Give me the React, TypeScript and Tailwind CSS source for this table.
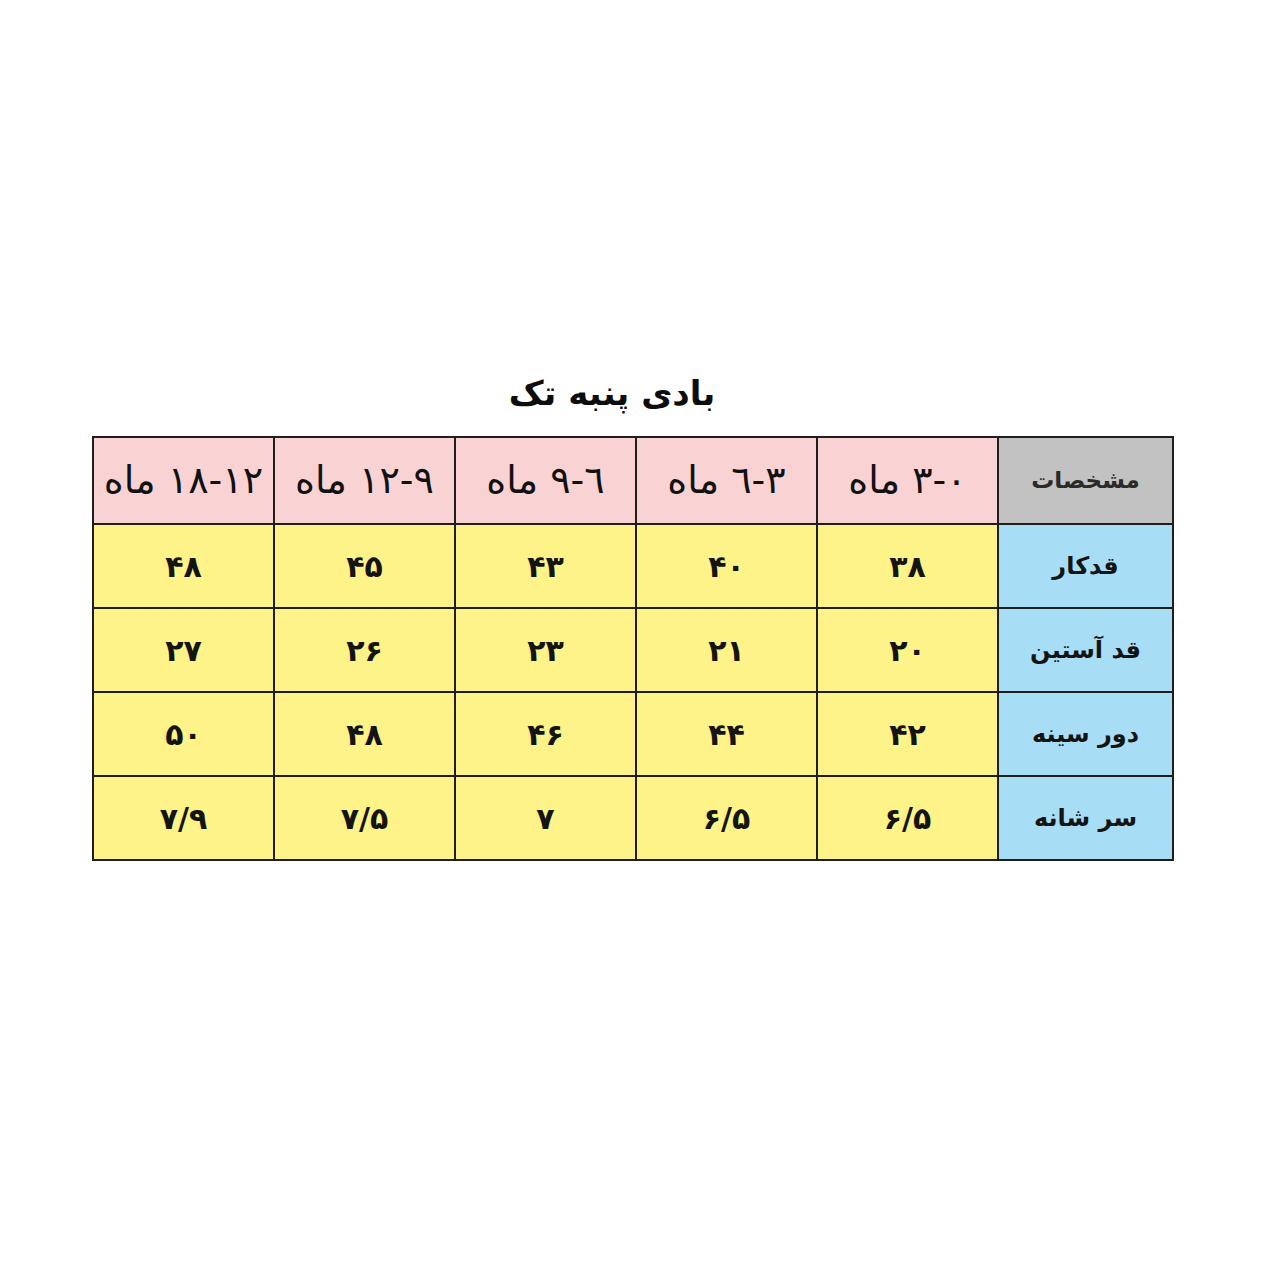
const headers = ["٠-٣ ماه", "٣-٦ ماه", "٦-٩ ماه", "٩-١٢ ماه", "١٢-١٨ ماه"]

const rows = [
  { label: "قدکار", values: ["۳۸", "۴۰", "۴۳", "۴۵", "۴۸"] },
  { label: "قد آستین", values: ["۲۰", "۲۱", "۲۳", "۲۶", "۲۷"] },
  { label: "دور سینه", values: ["۴۲", "۴۴", "۴۶", "۴۸", "۵۰"] },
  { label: "سر شانه", values: ["۶/۵", "۶/۵", "۷", "۷/۵", "۷/۹"] },
]

export default function App() {
  return (
    <div
      className="w-[1280px] h-[1280px] bg-white pt-[366px] pl-[92px]"
      style={{ fontFamily: '"DejaVu Sans", sans-serif' }}
    >
      <div className="w-[1082px]">
        <div dir="rtl" className="flex justify-center pr-[42px] mb-[16px]">
          <h1 className="text-[34px] leading-[54px] font-bold text-[#0d0d0d]">بادی پنبه تک</h1>
        </div>

        <div
          dir="rtl"
          className="grid grid-cols-[173px_repeat(5,179px)] grid-rows-[85px_repeat(4,82px)] gap-[2px] p-[2px] bg-[#1e1e1e]"
        >
          <div className="bg-[#c2c2c2] flex items-center justify-center text-[23px] font-bold text-[#2a2a2a]">
            مشخصات
          </div>
          {headers.map((h) => (
            <div
              key={h}
              className="bg-[#f9d3d4] flex items-center justify-center text-[38px] text-[#111]"
            >
              {h}
            </div>
          ))}

          {rows.map((r) => (
            <>
              <div
                key={r.label}
                className="bg-[#a8ddf6] flex items-center justify-center text-[24px] font-bold text-[#141414]"
              >
                {r.label}
              </div>
              {r.values.map((v, i) => (
                <div
                  key={r.label + i}
                  className="bg-[#fdf388] flex items-center justify-center text-[30px] font-bold text-[#141414]"
                >
                  {v}
                </div>
              ))}
            </>
          ))}
        </div>
      </div>
    </div>
  )
}
